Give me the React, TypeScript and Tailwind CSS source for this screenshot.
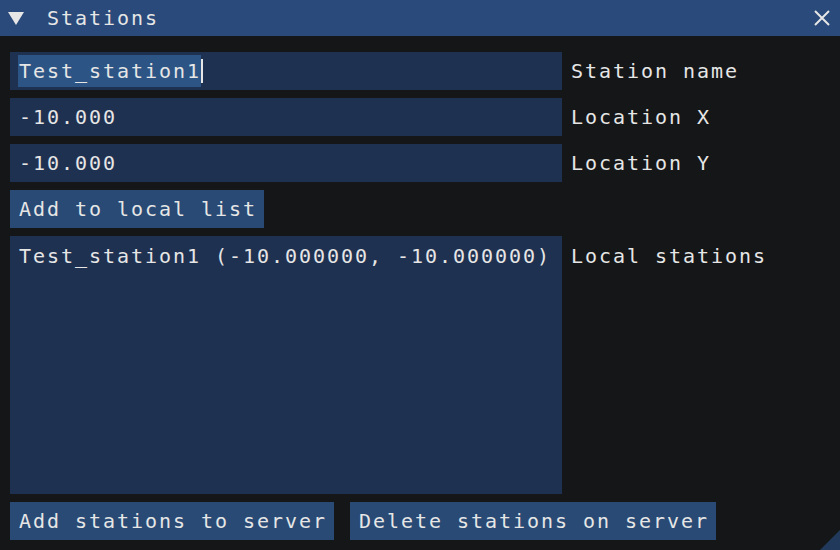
import React from 'react';

const mono = "font-['DejaVu_Sans_Mono',monospace] text-[20px] tracking-[1.96px] text-[#e6e6e6]";

const InputRow = ({ value, label, selected }: { value: string; label: string; selected?: boolean }) => (
  <div className="flex items-center">
    <div className="w-[552px] h-[38px] bg-[#1f3150] flex items-center pl-[8px]">
      {selected ? (
        <div className="flex items-center h-[32px]">
          <span className="bg-[#2c5585] h-[32px] flex items-center pl-[1px]">{value}</span>
          <span className="w-[2px] h-[24px] bg-[#e6e6e6]" />
        </div>
      ) : (
        <span className="pl-[1px]">{value}</span>
      )}
    </div>
    <span className="ml-[9px]">{label}</span>
  </div>
);

const Button = ({ children }: { children: React.ReactNode }) => (
  <div className="h-[38px] bg-[#284a74] flex items-center px-[8px] pl-[9px] pr-[7px]">{children}</div>
);

export default function App() {
  return (
    <div className={`w-[840px] h-[550px] bg-[#151618] relative overflow-hidden flex flex-col ${mono}`}>
      {/* title bar */}
      <div className="h-[36px] bg-[#294a7a] flex items-center shrink-0">
        <svg width="16" height="14" viewBox="0 0 16 14" className="ml-[8px]">
          <polygon points="0,1 16,1 8,14" fill="#e6e6e6" />
        </svg>
        <span className="ml-[23px]">Stations</span>
        <svg width="16" height="16" viewBox="0 0 16 16" className="ml-auto mr-[10px]">
          <path d="M1 1 L15 15 M15 1 L1 15" stroke="#e6e6e6" strokeWidth="2" />
        </svg>
      </div>

      <div className="flex flex-col gap-[8px] pl-[10px] pt-[16px]">
        <InputRow value="Test_station1" label="Station name" selected />
        <InputRow value="-10.000" label="Location X" />
        <InputRow value="-10.000" label="Location Y" />
        <div className="flex">
          <Button>Add to local list</Button>
        </div>
        <div className="flex">
          <div className="w-[552px] h-[258px] bg-[#1f3150] pl-[9px] pt-[7px]">
            <div className="h-[26px] flex items-center">Test_station1 (-10.000000, -10.000000)</div>
          </div>
          <span className="ml-[9px] pt-[7px] h-[26px] flex items-center box-content">Local stations</span>
        </div>
        <div className="flex gap-[16px]">
          <Button>Add stations to server</Button>
          <Button>Delete stations on server</Button>
        </div>
      </div>

      {/* resize grip */}
      <svg width="20" height="20" viewBox="0 0 20 20" className="absolute right-0 bottom-0">
        <polygon points="20,0 20,20 0,20" fill="#213a5c" />
      </svg>
    </div>
  );
}
